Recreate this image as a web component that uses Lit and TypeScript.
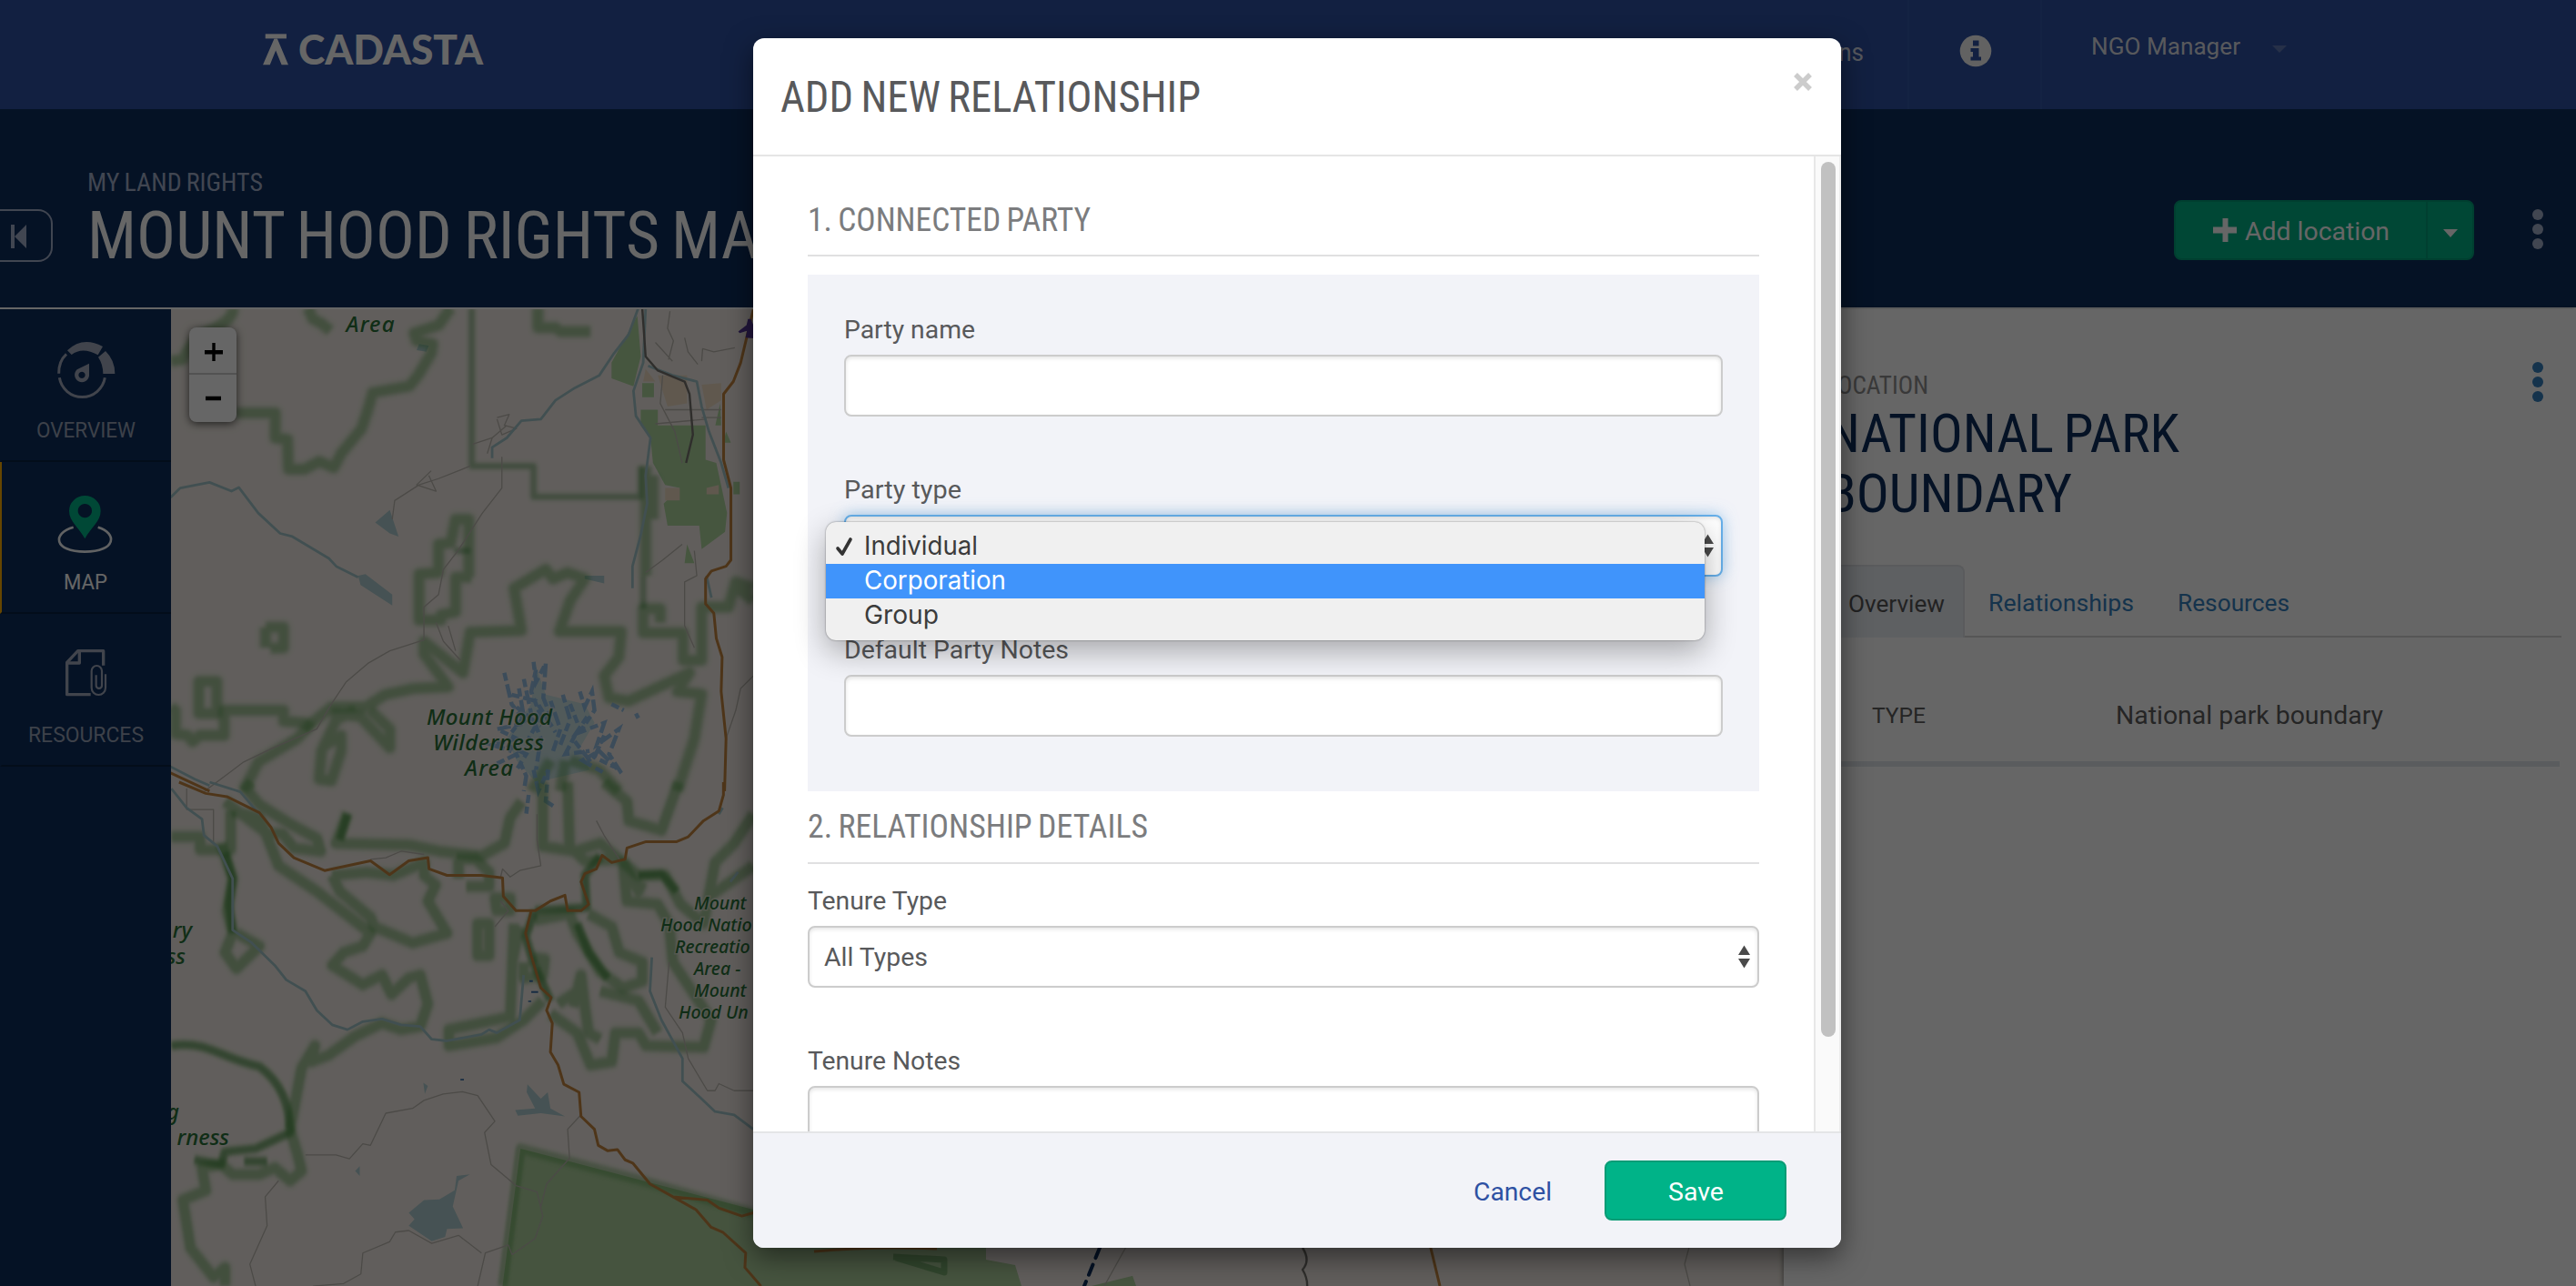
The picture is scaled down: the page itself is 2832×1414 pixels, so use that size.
import { LitElement, html, svg, css, nothing } from "lit";
import { customElement, property } from "lit/decorators.js";

/* Text set to an exact advance width; the box is one em high with capitals centred in it. */
const fit = (text: string, width: number, size: number, cls = "") => html`
  <svg class="fit ${cls}" width=${width} height=${size} font-size=${size}>
    <text x="0" y=${size * 0.8555 - 1} textLength=${width} lengthAdjust="spacingAndGlyphs">${text}</text>
  </svg>`;

const fitStyles = css`
  .fit { display: block; overflow: visible; flex: none; fill: currentColor; font-family: Roboto, sans-serif; }
  .cond { font-family: "Roboto Condensed", Roboto, sans-serif; font-stretch: condensed; word-spacing: -0.05em; }
`;

@customElement("land-map")
export class LandMap extends LitElement {
  static styles = css`
    :host { display: block; position: relative; overflow: hidden; background: #f2ece5; }
    .map { display: block; }
    .s { fill: none; vector-effect: non-scaling-stroke; stroke-linejoin: round; stroke-linecap: butt; }
    .band { stroke: #4c963f; stroke-opacity: 0.38; stroke-width: 11; }
    .wide { stroke: #4c963f; stroke-opacity: 0.12; stroke-width: 17; }
    .dark { stroke: #2f7d33; stroke-opacity: 0.4; stroke-width: 7; }
    .river { stroke: #a3c6cb; stroke-width: 2.8; }
    .road { stroke: #c4853f; stroke-width: 3; }
    .trail { stroke: #bdb8b1; stroke-width: 1.3; }
    .rail { stroke: #77736e; stroke-width: 2.4; }
    .lake { fill: #b0cdd1; }
    .forest { fill: #aed19d; }
    .orchard { fill: #aed69f; }
    .town { fill: #f0dcc4; }
    .ice { fill: none; stroke: #80b2e0; stroke-width: 4.5; stroke-dasharray: 9 4 15 5; vector-effect: non-scaling-stroke; opacity: 0.8; }
    .icefill { fill: #bcdcdf; opacity: 0.75; }
    .label { font-family: "Noto Sans", "Open Sans", sans-serif; font-style: italic; font-weight: 500; fill: #287238; stroke: #f2ece5; stroke-opacity: 0.5; stroke-width: 3; paint-order: stroke; }
    .border { stroke: #0d2e5c; stroke-width: 4; stroke-dasharray: 12 8; stroke-linecap: round; }
    .zoom { position: absolute; left: 20px; top: 20px; width: 52px; height: 104px; background: #fff; border-radius: 8px; box-shadow: 0 2px 10px rgba(0, 0, 0, 0.65); }
    .zoom svg { display: block; }
  `;

  private bands = [
    "M478 25 C480 60 450 85 420 105 C395 130 385 160 375 190 L350 195",
    "M632 25 L642 60 L660 75 L678 98",
    "M925 25 L900 80 L850 105 L855 130 L888 140 L885 170 L858 240 L840 275 L765 295 L755 350 L742 410 L700 490 L685 535 L655 515 L625 540 L592 540 L590 445 L565 440 L565 360 L485 360",
    "M1104 25 V88 L1140 88 L1150 100 H1212",
    "M968 885 L935 885 V995 L905 1005 V1022 H860 V875 L900 870 V780 L925 775 L935 700 H962 V885",
    "M545 1045 H582 V1110 L555 1112 M545 1045 V1110",
    "M408 1218 H445 V1320 H408 Z",
    "M350 1300 L360 1310 V1385 L385 1390 L395 1410 L410 1390 H460 V1310 H582 V1345 L625 1350 L640 1370",
    "M500 1568 L530 1475 L610 1400 L640 1350 L680 1300 H750 L790 1260 L850 1240 L920 1235 L870 1130 V1090 L950 1190 L965 1060 L1070 1055 L1055 920 L1120 860 L1135 890 L1165 870 L1200 890 L1170 960 L1148 1058 H1275 L1270 1140 L1240 1200 L1250 1270 L1290 1280 L1415 1190 L1390 1250 L1440 1258 L1425 1400 L1390 1568",
    "M680 1320 L740 1330 L770 1380 L800 1430 V1370 L760 1310 M660 1430 L700 1390 V1440 L680 1535 L655 1530 L660 1440 L690 1340 L730 1310",
    "M1130 1470 L1090 1568 M1160 1470 L1150 1568 M1170 1470 L1230 1500 L1270 1568",
    "M1546 920 L1510 900 L1495 980 H1440 V1150 H1402 V1062 H1320 V985 H1355 V1030 M1546 960 L1505 910",
    "M1325 530 V880 M1340 560 V700",
  ];

  private thinBands = ["M968 25 V530 H1095 V628 H1315 V530 M1320 880 V985 M932 800 H965"];

  private lowerBands = [
    "M230 0 L215 20 L250 70 L330 130 L400 175 L410 215 L340 205 L310 160 L270 160 L160 60 M180 90 L250 110 L300 260 L400 340 L540 470 L520 510 L470 530 L440 570 L480 600 L520 630 L570 600 L595 660 L640 610 L670 600 L690 690 L670 760 L620 770 L570 750 L500 790 L430 850 L385 870 L395 820 L360 890 L330 1080",
    "M20 170 L95 170 V210 H175 V90",
    "M480 95 L450 190 L640 195 L720 215 L830 230 L890 190 L905 110 L935 60",
    "M990 0 V200 L1075 215 L1140 190 L1190 240 L1100 245 L1060 200 L1055 0",
    "M1150 0 L1210 60 L1215 120 L1300 150 L1345 0",
    "M440 290 L530 280 L600 290 L680 250 L680 290 L710 320 L690 370 L740 470 L650 500 L550 450 L540 420 L460 340 L440 290",
    "M765 240 H815 L850 280 V325 H790 M770 240 V300",
    "M820 440 H850 V540 H820 Z M865 360 H905 V400 H870 Z",
    "M915 440 L905 730 L745 770 V820 L870 795 L940 740 L990 680 M940 560 V610 L990 600 L995 550 L965 545 M930 450 L910 560",
    "M150 190 L180 300 L165 400 L180 470 L160 530 L190 580 L250 510 L190 470",
    "M970 430 L1060 410 L1080 470 L1140 590 L1200 640 L1250 620 L1250 560 L1190 530 L1170 450 L1110 410",
    "M1010 720 L1080 780 L1115 880 L1170 870 L1180 780 L1240 780 L1260 820 L1410 825 L1430 740 L1380 650 L1330 560 L1320 440 L1290 380 L1210 370 L1200 250 L1240 340 L1250 310",
    "M1070 700 L1090 600 L1100 700 L1110 780 L1140 800 M1030 690 L1080 650 M1140 650 L1240 680 L1290 780",
    "M1200 250 L1240 290 L1310 290 L1350 380 L1410 440 L1440 250 L1490 190 L1540 100 M1420 360 L1540 260",
    "M330 1080 L350 1160 L360 1210 L330 1240 L290 1200 L250 1220 L180 1220 L150 1190 L100 1200 L110 1270 L50 1300 L70 1450 L130 1540 L160 1510 V1568",
  ];

  private darkBands = [
    "M20 820 C120 805 140 855 250 885 C290 920 330 980 330 1090 L240 1140 L160 1150 L150 1190 L80 1175 M210 1180 L270 1180",
    "M160 220 L180 300 L170 380 L180 470",
    "M1080 440 L1110 530 L1160 610 M1240 290 L1300 285 L1340 340",
    "M480 100 L460 180 M970 400 L945 480 L965 560 L1010 680 M1140 230 L1100 290 L1105 390 L970 400",
  ];

  render() {
    const bands = (ds: string[], cls: string) => ds.map((d) => svg`<path class="s ${cls}" d=${d} />`);
    return html`
      <svg class="map" width="1773" height="1074" viewBox="188 340 1773 1074">
        <defs>
          <filter id="soft" x="-5%" y="-5%" width="110%" height="110%"><feGaussianBlur stdDeviation="4 6" /></filter>
        </defs>
        <g transform="translate(0 330) scale(.5357 .3443)">
          <path class="lake" d="M770 710 L800 670 L818 755 L800 745Z M735 880 L750 875 L805 940 V975 L740 910Z M860 140 L880 145 L875 165 L855 160Z M1200 880 H1240 V905 L1200 890Z" />
          <path class="orchard" d="M1308 50 L1315 180 L1300 275 L1255 250 L1255 200Z M1318 265 H1342 V310 H1318Z M1315 350 H1350 V400 H1448 V510 L1470 520 L1492 680 L1488 740 L1440 795 L1435 720 H1370 L1362 650 L1395 600 L1365 590 L1340 520 L1335 440 L1315 400Z M1505 580 H1518 V620 H1505Z M1410 780 L1425 840 H1405Z M1478 330 L1480 400 H1468Z M1490 420 L1500 455 H1485Z" />
          <path class="town" d="M1350 240 H1410 V330 L1370 340Z M1440 270 L1480 265 V320 L1450 350Z M1325 220 L1345 260 H1320Z M1450 600 L1475 590 V620 H1450Z M1365 600 H1395 V640 H1365Z" />
          <path class="icefill" d="M1100 1170 L1120 1260 L1200 1290 L1220 1350 L1190 1430 L1210 1500 L1100 1540 L1060 1470 L1040 1400 L1090 1290Z" />
          <g filter="url(#soft)">${bands(this.bands, "wide")}${bands(this.bands, "band")}${bands(this.thinBands, "dark")}</g>
          <path class="s trail" d="M1360 240 L1355 330 L1385 420 L1400 520 M1365 350 H1480 M1345 395 L1450 380 M1440 375 H1480 M1375 35 L1370 90 L1382 130 L1372 190 M1345 135 L1380 195 M1405 120 L1412 165 L1432 205 M1440 195 L1442 155 L1465 165 L1508 152 M1020 375 L1045 365 L1035 400 L1060 410 L1030 430 L1020 380 M1010 440 L1000 490 M885 545 L855 590 L895 610 L880 560 M965 530 L900 570 L860 590 L810 640 L805 700 M1030 500 V600 L990 680 L940 800 L910 860 L900 940 L870 980 V1085 L800 1120 L755 1160 L710 1220 L680 1290 L650 1370 L560 1430 L500 1475 L420 1568 M895 1030 L910 1090 L945 1150 M920 1040 L935 1120 M970 460 L1010 440 L1040 400 M1400 780 L1360 830 L1325 870 M1425 800 L1430 880 L1405 900 V1040 L1425 1110 M1546 1200 L1520 1240 L1510 1310 L1490 1400" />
          <path class="s river" d="M1310 25 L1290 110 L1260 170 L1230 240 L1180 280 L1140 320 L1110 380 L1070 385 L1040 440 L1010 470 V505 M1325 25 L1320 200 L1300 290 L1305 370 L1335 440 L1325 560 L1328 650 L1315 750 L1298 850 V920 M1330 210 L1380 240 L1430 260 L1440 340 L1455 420 L1480 520 L1495 600 M1450 880 L1460 950 M350 630 L370 600 L430 582 L475 610 L490 598 L530 680 L575 745 L600 755 L675 825 L690 850 L735 885 M350 1490 L400 1530 L430 1550" />
          <path class="s rail" d="M1318 25 L1325 180 L1350 225 L1405 260 L1415 300 L1422 430 L1408 520" />
          <path class="s road" d="M1546 30 L1520 200 L1505 260 L1485 300 V510 L1500 600 V830 L1490 850 L1460 865 L1448 890 V970 L1465 1000 L1470 1080 L1482 1140 L1480 1250 L1490 1400 L1487 1568 M350 1510 L430 1568" />
          <path class="ice" d="M1095 1155 L1100 1220 L1120 1160 L1115 1270 L1130 1330 M1035 1190 L1050 1290 L1080 1350 L1020 1370 L1060 1400 L1010 1420 L1050 1440 M1050 1260 L1100 1280 L1140 1380 M1075 1210 L1090 1320 L1110 1400 L1100 1500 M1155 1260 L1170 1340 L1150 1420 M1190 1250 L1200 1300 L1215 1250 L1220 1310 L1190 1380 L1240 1350 L1225 1420 L1270 1370 L1250 1450 L1275 1510 L1230 1440 L1195 1470 L1240 1510 M1255 1290 L1280 1310 M1305 1320 L1310 1335 M1020 1480 L1060 1450 L1080 1520 L1075 1568 M1180 1390 L1160 1450 L1210 1440 M1060 1300 L1110 1360 M1170 1290 L1185 1350 M1100 1180 L1090 1250 L1110 1330 L1085 1400 M1065 1240 L1075 1330 L1050 1380 M1130 1280 L1150 1370 L1135 1440 M1205 1330 L1175 1400 L1215 1480 M1240 1390 L1220 1460 L1260 1490 M1040 1420 L1080 1450 L1060 1500 M1095 1500 L1105 1568 L1125 1500 L1120 1600 L1140 1620 M1085 1580 L1080 1640" />
          <path fill="#55389a" d="M1515 100 L1532 80 L1535 60 H1541 L1546 80 V122 L1530 120 L1533 98 L1518 105Z" />
        </g>
        <g transform="translate(180 860) scale(.4209 .3534)">
          <path class="forest" d="M932 1140 L1540 1330 H2450 L2490 1400 L2540 1568 H885Z" />
          <path class="lake" d="M950 940 L985 985 L1003 965 L1010 1015 L1048 1040 L985 1030 L925 1038 L918 1020 L970 1015 L948 965Z M640 1340 L680 1300 L720 1298 L760 1270 L765 1225 L800 1220 L770 1240 L755 1320 L782 1388 L740 1390 L735 1415 L700 1428 L640 1380 L655 1360Z M678 935 L690 945 L682 970Z M500 1210 L512 1195 V1225Z" />
          <g filter="url(#soft)">${bands(this.lowerBands, "wide")}${bands(this.lowerBands, "band")}${bands(this.darkBands, "band")}${bands(this.darkBands, "dark")}
            <path class="s band" d="M885 1568 L932 1140 L1250 1240 L1540 1340" /></g>
          <path class="s trail" d="M975 100 V180 L985 260 L930 275 L905 295 L885 270 L880 295 M540 240 L580 235 L620 215 L680 225 M1130 120 L1150 165 L1190 240 M370 1160 H450 L485 1172 L520 1125 L540 1130 L580 1030 L650 1015 L680 990 L730 970 L780 963 L820 975 L865 1055 L838 1090 L855 1190 L920 1255 L975 1275 L990 1350 L970 1420 L910 1470 L900 1440 L840 1465 L820 1568 M1090 1035 L1055 1080 L1060 1170 L1000 1250 L985 1320 M300 1240 L265 1290 L270 1380 L225 1500 L240 1568 M390 1568 L470 1560 L515 1530 L520 1465 L590 1430 L605 1400 L640 1395 L700 1435 L770 1410 L830 1465 M1320 560 L1310 700 L1355 780 L1370 860 L1420 960 L1440 960 L1450 938 L1490 960 H1540 M60 20 V85 H130 V190 M865 450 L900 400 L880 370" />
          <path class="s river" d="M20 20 L60 80 L100 115 L105 165 L140 200 L180 300 L180 460 L230 500 L290 570 L320 615 L370 650 L400 710 L440 755 L480 770 L520 745 L570 737 L620 755 L670 760 L700 800 L740 805 L830 785 L850 770 L870 780 L930 740 L940 600 M120 0 L200 30 L250 100 M1275 545 L1270 650 L1300 740 L1355 860 L1355 930 L1400 980 L1440 1025 L1490 1035 L1540 1080 M1480 310 L1500 280 M1450 100 L1460 80" />
          <path class="s road" d="M40 0 L110 35 L165 45 L250 95 L280 140 L300 190 L340 235 L420 275 L540 245 L590 288 L640 245 L690 235 L693 270 L740 290 H830 L885 298 L887 355 L920 400 H970 L1010 370 L1048 352 L1055 400 H1090 L1110 380 L1090 310 L1100 285 L1130 270 L1145 228 L1170 250 L1205 240 L1210 205 L1260 185 H1340 L1370 170 L1410 120 L1450 90 L1462 40 V0 M960 400 L945 470 L960 540 L985 640 L1012 670 L1000 710 L1015 750 L1010 840 L1030 880 L1045 940 L1085 965 L1090 1040 L1125 1080 L1135 1130 L1160 1147 L1185 1143 L1205 1175 L1225 1185 L1270 1250 L1330 1290 L1420 1300 L1450 1325 L1510 1350 L1540 1340 M1330 1290 L1390 1330 L1430 1385 L1460 1400 L1520 1465 L1518 1510 L1560 1568" />
          <path fill="#3b6fa6" d="M955 616 H964 V622 H955Z M960 650 H978 V656 H960Z M952 680 H960 V684 H952Z M775 923 H784 V928 H775Z" />
        </g>
        <g>
          <path fill="#f2ece5" d="M1084 1365 V1385 L1116 1391 L1123 1414 H1200 L1400 1365Z" />
          <path class="s dark" d="M982 1382 L1038 1385 V1399 L985 1383" />
          <path class="s road" d="M895 1376 Q960 1370 1030 1373 M1570 1360 L1583 1414" />
          <path class="s border" d="M1209 1372 L1192 1414" />
          <path class="s trail" d="M1238 1371 L1214 1414 M1860 1360 L1852 1390 L1858 1414" />
          <path class="s rail" d="M1432 1372 q9 14 0 24 q6 10 5 20" />
        </g>
        <g class="label" font-size="24">
          <text x="380.500" y="364.5" textLength="53">Area</text>
          <text x="469" y="797" textLength="138">Mount Hood</text>
          <text x="476" y="825" textLength="122">Wilderness</text>
          <text x="511" y="853" textLength="53">Area</text>
          <text x="211" y="1031" text-anchor="end">ry</text>
          <text x="204" y="1060" text-anchor="end">ss</text>
          <text x="197" y="1231" text-anchor="end">g</text>
          <text x="252" y="1259" text-anchor="end">rness</text>
        </g>
        <g class="label" font-size="19.5">
          <text x="763" y="1000">Mount</text><text x="726" y="1024">Hood Natio</text><text x="742" y="1047.6">Recreatio</text>
          <text x="763" y="1072">Area -</text><text x="763" y="1095.7">Mount</text><text x="746" y="1119.7">Hood Un</text>
        </g>
      </svg>
      <div class="zoom">
        <svg width="52" height="104" viewBox="0 0 52 104">
          <path d="M0 51h52" stroke="#ccc" stroke-width="2" />
          <path d="M17 27.2h20M18 78h17" stroke="#000" stroke-width="4.6" />
          <path d="M27 17v20" stroke="#000" stroke-width="3.4" />
        </svg>
      </div>`;
  }
}

@customElement("relationship-dialog")
export class RelationshipDialog extends LitElement {
  static styles = [fitStyles, css`
    :host { display: flex; flex-direction: column; box-sizing: border-box; width: 1196px; height: 1330px; border-radius: 12px; background: #fff; overflow: visible; box-shadow: 0 10px 30px rgba(0, 0, 0, 0.5); color: #58595b; }
    .head { display: flex; justify-content: space-between; align-items: flex-start; box-sizing: border-box; height: 130px; flex: none; padding: 41px 31px 0 30px; border-bottom: 2px solid #e5e5e5; }
    .close { display: block; margin-top: -4px; }
    .body { display: flex; justify-content: space-between; flex: none; height: 1072px; }
    .form { width: 1046px; padding-left: 60px; height: 1072px; overflow: hidden; clip-path: inset(0 -20px 0 0); }
    .section { color: #7b7c7e; padding: 51.5px 0 20.5px 0; border-bottom: 2px solid #e0e0e1; }
    .section.next { padding: 21px 0 21px 0; }
    .well { margin-top: 20px; padding: 46.5px 40px 60px; background: #f2f3f8; }
    .field + .field { margin-top: 66.5px; }
    .plain { padding-top: 26.5px; }
    .control { position: relative; display: flex; align-items: center; justify-content: space-between; box-sizing: border-box; height: 68px; margin-top: 13.5px; padding: 0 7px 0 16px; border: 2px solid #ccc; border-radius: 8px; background: #fff; box-shadow: inset 0 2px 4px rgba(0, 0, 0, 0.1); }
    .control .fit { margin-top: 2px; }
    .control.focus { border-color: #66afe9; box-shadow: inset 0 2px 4px rgba(0, 0, 0, 0.1), 0 0 16px rgba(102, 175, 233, 0.6); }
    .track { box-sizing: border-box; width: 30px; height: 1072px; padding: 6px 0 0 6px; background: #fafafa; border-left: 2px solid #e7e7e7; border-right: 2px solid #ededed; }
    .thumb { width: 16px; height: 962px; border-radius: 8px; background: #c1c1c1; }
    .foot { box-sizing: border-box; flex: none; height: 128px; display: flex; justify-content: flex-end; align-items: flex-start; gap: 58px; padding: 30px 60px 0 0; border-top: 2px solid #e4e5e7; border-radius: 0 0 12px 12px; background: #f2f3f8; }
    .cancel { color: #2e51a3; height: 66px; display: flex; align-items: center; padding-top: 3px; box-sizing: border-box; }
    .save { box-sizing: border-box; width: 200px; height: 66px; padding-top: 3px; display: flex; align-items: center; justify-content: center; color: #fff; background: #00b388; border: 2px solid #0a9c76; border-radius: 8px; }
    .menu { position: absolute; left: -22px; top: 6px; z-index: 2; box-sizing: border-box; width: 966px; height: 130px; padding: 8px 0; border-radius: 11px; background: #f0f0f0; color: #3b3b3b; box-shadow: 0 0 2px rgba(0, 0, 0, 0.5), 0 12px 34px rgba(0, 0, 0, 0.32); }
    .option { display: flex; align-items: center; height: 38px; padding-left: 10px; gap: 10px; }
    .option.hot { background: #4094fb; color: #fff; }
    .mark { width: 22px; flex: none; height: 24px; }
    .option .fit { font-family: Inter, "Liberation Sans", sans-serif; margin-top: 0; }
  `];

  private arrows() {
    return html`<svg width="15" height="28" viewBox="0 0 15 28"><path fill="#4a4a4a" d="M7.5 1.5 14 12H1ZM1 16h13L7.5 26.5Z" /></svg>`;
  }

  private option(label: string, width: number, checked: boolean, hot: boolean) {
    return html`<div class="option ${hot ? "hot" : ""}">
      <svg class="mark" viewBox="0 0 22 24">${checked ? svg`<path d="M3 14 8 20 17 4" fill="none" stroke="#333" stroke-width="3.6" stroke-linecap="round" stroke-linejoin="round"/>` : nothing}</svg>
      ${fit(label, width, 28)}</div>`;
  }

  render() {
    return html`
      <div class="head">
        ${fit("ADD NEW RELATIONSHIP", 462, 48, "cond")}
        <svg class="close" width="22" height="22" viewBox="0 0 22 22"><path d="M3 3 19 19M19 3 3 19" stroke="#ccc" stroke-width="5.4" /></svg>
      </div>
      <div class="body">
        <div class="form">
          <div class="section">${fit("1. CONNECTED PARTY", 311, 36, "cond")}</div>
          <div class="well">
            <div class="field">${fit("Party name", 144, 28)}<div class="control"></div></div>
            <div class="field">${fit("Party type", 129, 28)}
              <div class="control focus"><span></span>${this.arrows()}
                <div class="menu">
                  ${this.option("Individual", 125, true, false)}
                  ${this.option("Corporation", 156, false, true)}
                  ${this.option("Group", 82, false, false)}
                </div>
              </div>
            </div>
            <div class="field">${fit("Default Party Notes", 247, 28)}<div class="control"></div></div>
          </div>
          <div class="section next">${fit("2. RELATIONSHIP DETAILS", 374, 36, "cond")}</div>
          <div class="plain">
            <div class="field">${fit("Tenure Type", 153, 28)}<div class="control">${fit("All Types", 114, 28)}${this.arrows()}</div></div>
            <div class="field">${fit("Tenure Notes", 168, 28)}<div class="control"></div></div>
          </div>
        </div>
        <div class="track"><div class="thumb"></div></div>
      </div>
      <div class="foot">
        <div class="cancel">${fit("Cancel", 86, 28)}</div>
        <div class="save">${fit("Save", 61, 28)}</div>
      </div>`;
  }
}

@customElement("side-item")
export class SideItem extends LitElement {
  @property() label = "";
  @property({ type: Number }) width = 100;
  @property() icon = "";

  static styles = [fitStyles, css`
    :host { display: flex; flex-direction: column; align-items: center; box-sizing: border-box; height: 167.5px; border-bottom: 2px solid #082142; border-left: 2px solid transparent; padding-right: 2px; color: #99a3b8; }
    :host([active]) { border-left-color: #ffae00; color: #fff; }
    .icon { display: block; height: 100px; width: 100px; margin: 17px 0 4.5px; }
  `];

  private glyph() {
    if (this.icon === "gauge")
      return svg`<g fill="#a3aabd"><path d="M78 76Q128 28 195 63L179 91Q128 62 92 90Z"/><path d="M204 78Q235 108 235 153H196Q196 122 180 98Z"/>
        <path fill-rule="evenodd" d="M150 119V160A24 24 0 1 1 110 139ZM126 146a11 11 0 1 0 .1 0Z"/></g>
        <path d="M50 152Q49 112 75 88M52 166A76 76 0 0 0 202 166" fill="none" stroke="#a3aabd" stroke-width="9"/>`;
    if (this.icon === "pin")
      return svg`<path transform="translate(0 -504)" d="M98 659C28 678 32 740 136 740S244 678 179 659" fill="none" stroke="#fff" stroke-opacity=".95" stroke-width="8"/>
        <path transform="translate(0 -504)" fill-rule="evenodd" fill="#00b388" d="M136 697C116 660 84 640 84 605A52 50 0 0 1 188 605C188 640 156 660 136 697ZM136 582a23 23 0 1 0 .1 0Z"/>`;
    return svg`<g transform="translate(0 -1006)" fill="none" stroke="#a3aabd" stroke-width="10" stroke-linejoin="round"><path d="M155 1212H77V1106L113 1068H197V1116"/><path d="M77 1108H118V1068"/>
      <path stroke-width="6.5" d="M204 1145V1190a23 23 0 0 1-46 0V1134a17 17 0 0 1 34 0V1182a9.500 9.500 0 0 1-19 0V1148"/></g>`;
  }

  render() {
    return html`<svg class="icon" viewBox="-12 -9 300 300">${this.glyph()}</svg>${fit(this.label, this.width, 23)}`;
  }
}

@customElement("app-root")
export class AppRoot extends LitElement {
  static styles = [fitStyles, css`
    :host { display: block; position: relative; width: 2832px; height: 1414px; overflow: hidden; background: #fff; font-family: Roboto, sans-serif; }
    .nav { display: flex; height: 120px; background: #2d50a2; color: #fff; }
    .brand { display: flex; align-items: flex-start; gap: 11px; padding: 37px 0 0 289px; flex: 1; }
    .brand .fit { font-family: Lato, sans-serif; font-weight: 900; margin-top: -4px; }
    .cell { display: flex; align-items: flex-start; box-sizing: border-box; border-right: 2px solid #3457a8; }
    .links { padding: 44px 48px 0 0; color: #d8dce8; }
    .info { width: 146px; padding: 38px 0 0 54px; }
    .info svg { margin-left: 1px; }
    .user { width: 587px; padding: 39px 0 0 54px; border: 0; gap: 34px; color: #dcdfe6; }
    .user .caret { margin-top: 10px; }
    .hero { display: flex; box-sizing: border-box; height: 220px; border-bottom: 2px solid #fff; background: #0d2e5c; color: #fff; }
    .toggle { box-sizing: border-box; width: 58px; height: 58px; margin-top: 110px; border: 2px solid #a3aecb; border-left: 0; border-radius: 0 16px 16px 0; padding: 14px 0 0 12px; }
    .titles { flex: 1; padding: 67px 0 0 38px; display: flex; flex-direction: column; gap: 7.5px; }
    .sub { color: #a3aecb; }
    .add { display: flex; box-sizing: border-box; width: 330px; height: 66px; margin-top: 100px; border: 2px solid #009f79; border-radius: 8px; background: #00b184; }
    .main { flex: 1; display: flex; align-items: center; padding-left: 41px; gap: 9px; border-right: 2px solid #009f79; }
    .main .fit { margin-top: 4px; }
    .drop { width: 49px; display: flex; align-items: center; justify-content: center; padding-top: 6px; }
    .dots { display: block; width: 14px; height: 46px; }
    .hero .dots { margin: 109px 35px 0 63px; fill: #a3aecb; }
    .work { display: grid; grid-template-columns: 188px 1773px 1fr; height: 1074px; }
    .side { background: #0d2e5c; }
    .panel { padding: 71px 16px 0 47px; box-shadow: -2px 0 4px rgba(0, 0, 0, 0.3); background: #fff; position: relative; }
    .top { display: flex; justify-content: space-between; }
    .kind { color: #8f8f8f; margin-bottom: 8.5px; }
    .name { color: #0d2e5c; display: grid; gap: 6px; }
    .top .dots { fill: #357fbd; margin: -14px 19px 0 0; }
    .tabs { display: flex; height: 78px; margin-top: 48.5px; border-bottom: 2px solid #d6d6d6; }
    .tab { display: flex; align-items: center; height: 80px; box-sizing: border-box; color: #357fbd; padding: 5px 0 0 26px; margin-right: 22px; }
    .tab.on { width: 152px; padding-left: 22px; margin-right: 0; color: #555; background: #ecf0f6; border: 2px solid #e2e4e8; border-bottom: 0; border-radius: 8px 8px 0 0; }
    .row { display: flex; align-items: center; box-sizing: border-box; height: 142px; margin-right: 2px; padding: 35px 0 0 50px; border-bottom: 6px solid #e2e6ec; color: #5c5c5c; }
    .row .fit + .fit { margin-left: 209px; }
    .shade { position: absolute; inset: 0; background: rgba(0, 0, 0, 0.6); }
    relationship-dialog { position: absolute; left: 828px; top: 42px; }
  `];

  private dots() {
    return html`<svg class="dots" viewBox="0 0 14 46"><circle cx="7" cy="7" r="6" /><circle cx="7" cy="23" r="6" /><circle cx="7" cy="39" r="6" /></svg>`;
  }

  render() {
    return html`
      <div class="nav">
        <div class="brand">
          <svg width="28" height="35" viewBox="27 36 83 104" fill="#fff"><path d="M35 37H104V52H35Z" /><path d="M64 52H74L110 138H88L69 91 50 138H27Z" /></svg>
          ${fit("CADASTA", 203, 46)}
        </div>
        <div class="cell links">${fit("Organizations", 160, 28)}</div>
        <div class="cell info"><svg width="36" height="36" viewBox="0 0 36 36"><circle cx="18" cy="18" r="17.3" fill="#f5f5f5" /><path fill="#2d50a2" d="M15 6.500h6.500v6H15ZM12.500 15h9v9.500h2.500v4H12.500v-4H15V19h-2.500Z" /></svg></div>
        <div class="cell user">${fit("NGO Manager", 164, 26)}<svg class="caret" width="18" height="10" viewBox="0 0 18 10"><path fill="#6079b4" d="M1 1h16L9 9Z" /></svg></div>
      </div>
      <div class="hero">
        <div class="toggle"><svg width="18" height="28" viewBox="0 0 18 28" fill="#a3aecb"><path d="M0 1h4v26H0ZM17 1v26L4 14Z" /></svg></div>
        <div class="titles">
          <div class="sub">${fit("MY LAND RIGHTS", 193, 28, "cond")}</div>
          ${fit("MOUNT HOOD RIGHTS MA", 738, 72, "cond")}
        </div>
        <div class="add">
          <div class="main"><svg width="26" height="26" viewBox="0 0 26 26"><path d="M10.500 0h6v9.500H26v7h-9.500V26h-6v-9.500H0v-7h10.500Z" fill="#fff" /></svg>${fit("Add location", 159, 28)}</div>
          <div class="drop"><svg width="16" height="9" viewBox="0 0 16 9"><path fill="#fff" d="M0 0h16L8 9Z" /></svg></div>
        </div>
        ${this.dots()}
      </div>
      <div class="work">
        <div class="side">
          <side-item label="OVERVIEW" .width=${109} icon="gauge"></side-item>
          <side-item label="MAP" .width=${48} icon="pin" active></side-item>
          <side-item label="RESOURCES" .width=${127} icon="doc"></side-item>
        </div>
        <land-map></land-map>
        <div class="panel">
          <div class="top">
            <div>
              <div class="kind">${fit("LOCATION", 112, 27, "cond")}</div>
              <div class="name">${fit("NATIONAL PARK", 388, 60, "cond")}${fit("BOUNDARY", 270, 60, "cond")}</div>
            </div>
            ${this.dots()}
          </div>
          <div class="tabs">
            <div class="tab on">${fit("Overview", 106, 26)}</div>
            <div class="tab">${fit("Relationships", 160, 26)}</div>
            <div class="tab">${fit("Resources", 123, 26)}</div>
          </div>
          <div class="row">${fit("TYPE", 59, 24)}${fit("National park boundary", 294, 28)}</div>
        </div>
      </div>
      <div class="shade"></div>
      <relationship-dialog></relationship-dialog>`;
  }
}
